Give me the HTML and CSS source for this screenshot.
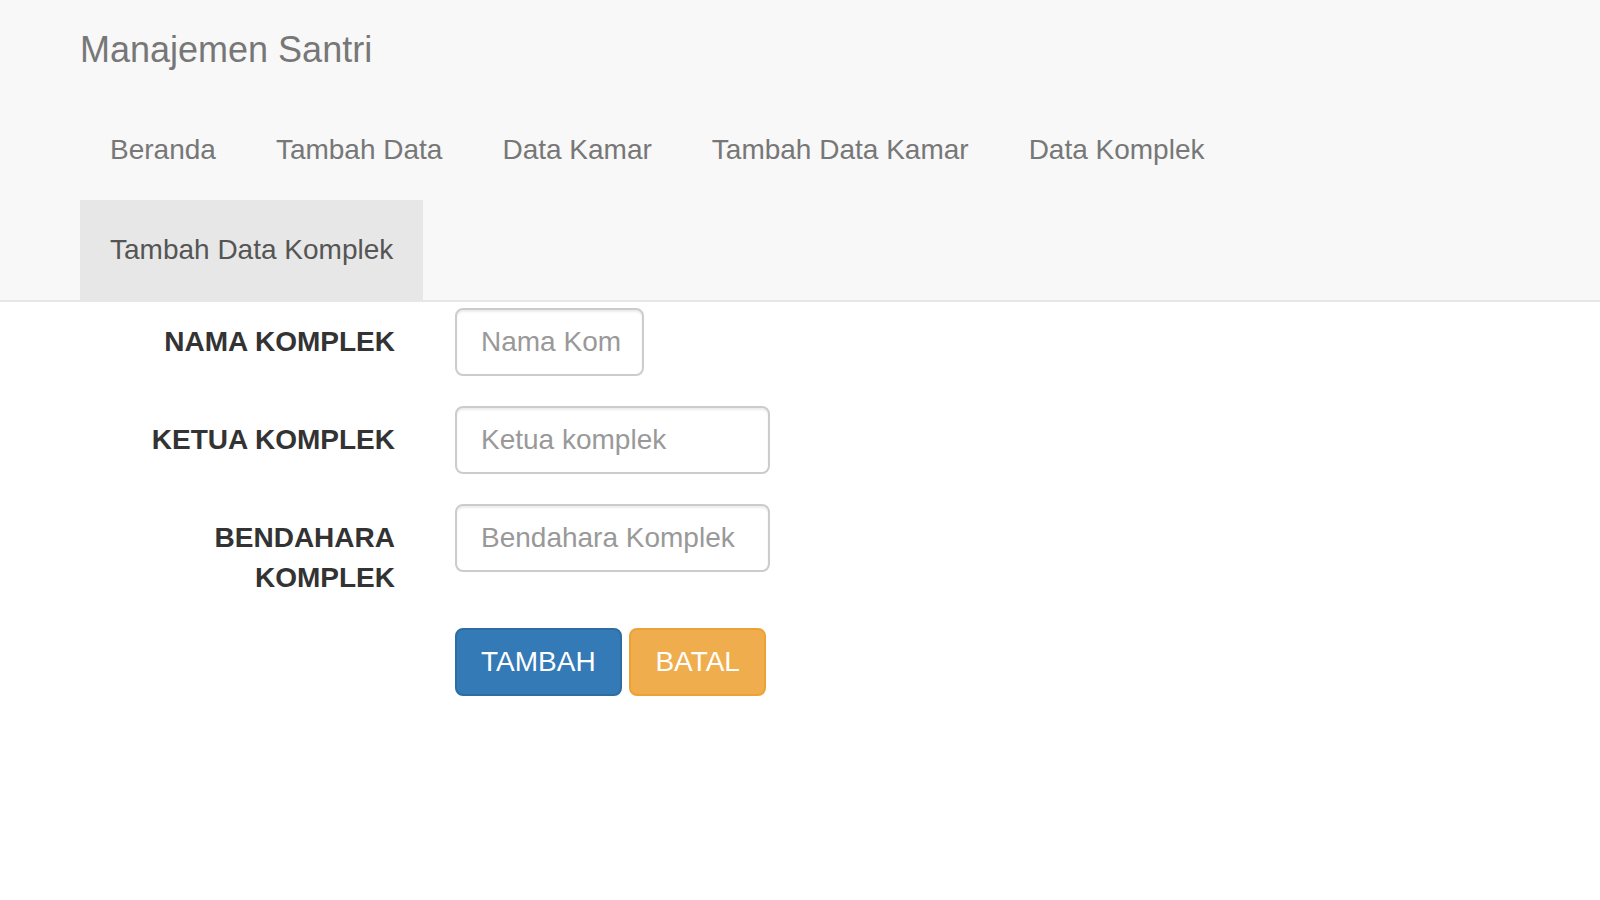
FILE: index.html
```html
<!DOCTYPE html>
<html lang="id">
  <head>
    <meta charset="utf-8">
    <title>Tambah Data Komplek</title>
    <link rel="stylesheet" href="styles.css">
  </head>

  <body>
    <nav class="navbar">
      <div class="container">
        <a class="brand" href="#">Manajemen Santri</a>

        <ul class="nav">
          <li><a href="#">Beranda</a></li>
          <li><a href="#">Tambah Data</a></li>
          <li><a href="#">Data Kamar</a></li>
          <li><a href="#">Tambah Data Kamar</a></li>
          <li><a href="#">Data Komplek</a></li>
          <li class="active"><a href="#">Tambah Data Komplek</a></li>
        </ul>
      </div>
    </nav>

    <form class="form" action="#">
      <div class="form-group">
        <label class="label" for="nama">NAMA KOMPLEK</label>
        <div class="field">
          <input class="input input-short" type="text" id="nama" placeholder="Nama Komplek">
        </div>
      </div>

      <div class="form-group">
        <label class="label" for="ketua">KETUA KOMPLEK</label>
        <div class="field">
          <input class="input" type="text" id="ketua" placeholder="Ketua komplek">
        </div>
      </div>

      <div class="form-group">
        <label class="label" for="bendahara">BENDAHARA KOMPLEK</label>
        <div class="field">
          <input class="input" type="text" id="bendahara" placeholder="Bendahara Komplek">
        </div>
      </div>

      <div class="form-group">
        <div class="field field-offset">
          <button class="btn btn-primary" type="submit">TAMBAH</button>
          <button class="btn btn-warning" type="reset">BATAL</button>
        </div>
      </div>
    </form>
  </body>
</html>
```

FILE: styles.css
```css
:root {
  --navbar-bg: #f8f8f8;
  --navbar-border: #e7e7e7;
  --link-color: #777;
  --active-color: #555;
  --text-color: #333;
  --input-border: #ccc;
  --placeholder: #999;
}

* {
  box-sizing: border-box;
}

body {
  margin: 0;
  font-family: "Liberation Sans", Arial, Helvetica, sans-serif;
  font-size: 28px;
  line-height: 40px;
  color: var(--text-color);
  background: #fff;
}

a {
  text-decoration: none;
}

/* navbar */

.navbar {
  background-color: var(--navbar-bg);
  border-bottom: 2px solid var(--navbar-border);
}

.container {
  width: 1500px;
  margin: 0 auto;
  padding: 0 30px;
}

.brand {
  display: block;
  height: 100px;
  padding: 30px 0;
  font-size: 36px;
  line-height: 40px;
  color: var(--link-color);
}

.nav {
  display: flex;
  flex-wrap: wrap;
  list-style: none;
  margin: 0;
  padding: 0;
}

.nav a {
  display: block;
  padding: 30px;
  line-height: 40px;
  color: var(--link-color);
}

.nav .active a {
  background-color: var(--navbar-border);
  color: var(--active-color);
}

/* form */

.form {
  width: 1500px;
  margin: 6px auto 0;
}

.form-group {
  display: grid;
  grid-template-columns: 375px 375px;
  margin-bottom: 30px;
}

.label {
  padding: 14px 30px 0;
  text-align: right;
  font-weight: bold;
}

.field {
  padding: 0 30px;
}

.field-offset {
  grid-column: 2 / span 1;
  white-space: nowrap;
}

.input {
  display: block;
  width: 100%;
  height: 68px;
  padding: 12px 24px;
  font-family: inherit;
  font-size: 28px;
  line-height: 40px;
  color: var(--active-color);
  background: #fff;
  border: 2px solid var(--input-border);
  border-radius: 8px;
  box-shadow: inset 0 2px 2px rgba(0, 0, 0, 0.075);
}

.input::placeholder {
  color: var(--placeholder);
}

.input-short {
  width: 189px;
  padding-right: 21px;
}

.btn {
  display: inline-block;
  height: 68px;
  padding: 12px 24px;
  font-family: inherit;
  font-size: 28px;
  line-height: 40px;
  color: #fff;
  border: 2px solid transparent;
  border-radius: 8px;
  vertical-align: middle;
}

.btn-primary {
  background-color: #337ab7;
  border-color: #2e6da4;
}

.btn-warning {
  background-color: #f0ad4e;
  border-color: #eea236;
}
```
